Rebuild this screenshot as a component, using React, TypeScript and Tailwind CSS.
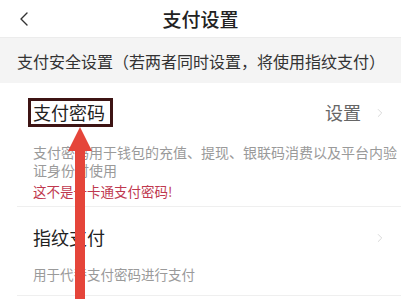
import { ChevronLeft, ChevronRight } from 'lucide-react'

const font = { fontFamily: "'Noto Sans CJK SC', 'Noto Sans', sans-serif" }

export default function App() {
  return (
    <div className="relative w-[401px] h-[299px] overflow-hidden bg-white" style={font}>
      {/* Header */}
      <div className="grid grid-cols-[1fr_auto_1fr] items-center h-[38px] border-b border-[#ececec]">
        <div className="pl-[12px] flex items-center">
          <ChevronLeft size={24} strokeWidth={1.4} className="text-[#333]" />
        </div>
        <div className="text-[19px] leading-[24px] font-medium text-[#222]">支付设置</div>
        <div />
      </div>

      {/* Section title */}
      <div className="h-[45px] bg-[#f4f4f4] px-[17px] flex items-center text-[16px] leading-[20px] text-[#333]">
        支付安全设置（若两者同时设置，将使用指纹支付）
      </div>

      {/* 支付密码 */}
      <div className="pt-[15px]">
        <div className="flex items-center justify-between pl-[33px] pr-[14px]">
          <div className="-ml-[5px] border-[3px] border-[#3d1414] pl-[2px] pr-[5px] text-[18px] leading-[23px] text-[#222]">
            支付密码
          </div>
          <div className="flex items-center gap-[12px]">
            <span className="text-[18px] leading-[23px] text-[#666]">设置</span>
            <ChevronRight size={14} strokeWidth={1.5} className="text-[#d4d4d4]" />
          </div>
        </div>
        <div className="mt-[16px] pl-[33px] pr-[4px] text-[14px] leading-[18px] text-[#9a9a9a]">
          支付密码用于钱包的充值、提现、银联码消费以及平台内验证身份时使用
        </div>
        <div className="mt-[3px] pl-[33px] text-[13.5px] leading-[18px] text-[#c0394f]">
          这不是一卡通支付密码!
        </div>
        <div className="mt-[6px] ml-[17px] border-b border-[#efefef]" />
      </div>

      {/* 指纹支付 */}
      <div className="pt-[19px]">
        <div className="flex items-center justify-between pl-[33px] pr-[14px]">
          <div className="text-[18px] leading-[23px] text-[#222]">指纹支付</div>
          <ChevronRight size={14} strokeWidth={1.5} className="text-[#d4d4d4]" />
        </div>
        <div className="mt-[16px] pl-[33px] text-[13.5px] leading-[18px] text-[#9a9a9a]">
          用于代替支付密码进行支付
        </div>
        <div className="mt-[12px] ml-[17px] border-b border-[#efefef]" />
      </div>

      {/* Annotation arrow */}
      <svg className="absolute left-0 top-0" width="401" height="299" viewBox="0 0 401 299">
        <polygon points="80,127 92,151 85,151 85,299 75,299 75,151 68,151" fill="#e5453a" />
      </svg>
    </div>
  )
}
